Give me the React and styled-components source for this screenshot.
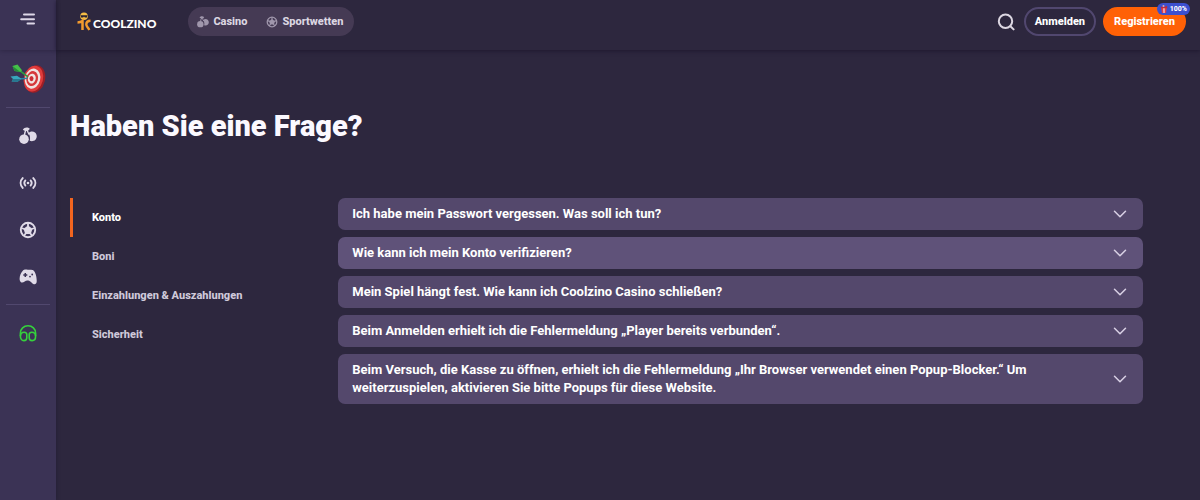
import React, { useState } from 'react';
import styled, { createGlobalStyle } from 'styled-components';


const GlobalStyle = createGlobalStyle`
    * {
        box-sizing: border-box;
    }

    body {
        margin: 0;
        background: #2d273e;
        color: #fff;
        font-family: Roboto, "Noto Sans", sans-serif;
        font-weight: 800;
    }

    button {
        border: 0;
        padding: 0;
        background: none;
        color: inherit;
        font: inherit;
        cursor: pointer;
    }

    a {
        color: inherit;
        text-decoration: none;
    }

    svg {
        display: block;
        flex: none;
    }
`;


const Page = styled.div`
    display: flex;
    min-height: 100vh;
`;

const Sidebar = styled.aside`
    display: flex;
    flex-direction: column;
    flex: none;
    width: 56px;
    background: #3b3355;
    box-shadow: 0 0 4px rgba(20, 14, 36, 0.4);
`;

const MenuButton = styled.button`
    display: flex;
    justify-content: center;
    height: 50px;
    padding-top: 10px;
    box-shadow: 0 1px 4px rgba(20, 14, 36, 0.3);
`;

const SideNav = styled.nav`
    display: flex;
    flex-direction: column;
    align-items: center;
    padding-top: 3px;
`;

const SideLink = styled.a`
    display: flex;
    align-items: center;
    justify-content: center;
    width: 100%;
    height: ${ ({ $tall }) => $tall ? 50 : 47 }px;
    color: ${ ({ $color }) => $color || '#e0dbe8' };
`;

const Divider = styled.hr`
    width: 44px;
    margin: 4px 0;
    border: 0;
    border-top: 1px solid #51486e;
`;

const Column = styled.div`
    display: flex;
    flex-direction: column;
    flex: 1;
    min-width: 0;
`;

const Header = styled.header`
    display: flex;
    align-items: flex-start;
    height: 50px;
    padding: 7px 14px 0 21px;
    box-shadow: 0 1px 4px rgba(20, 14, 36, 0.6);
`;

const Logo = styled.a`
    display: flex;
    align-items: center;
    gap: 2px;
    height: 32px;
    font-family: Lato, sans-serif;
    font-size: 12px;
    font-weight: 900;

    svg {
        margin-bottom: 4px;
    }
`;

const Switcher = styled.nav`
    display: flex;
    align-items: center;
    gap: 19px;
    height: 29px;
    margin-left: 32px;
    padding: 0 11px 0 9px;
    border-radius: 15px;
    background: #453a54;
`;

const SwitchLink = styled.a`
    display: flex;
    align-items: center;
    gap: 4px;
    color: #dcd7e2;
    font-size: 11px;

    svg {
        color: #a097ac;
    }
`;

const Actions = styled.div`
    display: flex;
    align-items: center;
    gap: 7px;
    margin-left: auto;
`;

const SearchButton = styled.button`
    margin-right: 2px;
    color: #dcd7e2;
`;

const PillButton = styled.button`
    position: relative;
    height: 29px;
    padding: 0 9px;
    border: 2px solid ${ ({ $primary }) => $primary ? '#ff6106' : '#51476f' };
    border-radius: 15px;
    background: ${ ({ $primary }) => $primary ? '#ff6106' : 'transparent' };
    font-size: 11px;
    line-height: 16px;
`;

const Badge = styled.span`
    position: absolute;
    top: -6px;
    right: -6px;
    display: flex;
    align-items: center;
    gap: 2px;
    height: 12px;
    padding: 0 3px;
    border-radius: 6px;
    background: #3c50cf;
    font-size: 7px;
    line-height: 12px;
`;

const Main = styled.main`
    padding: 54px 57px 54px 14px;
`;

const Title = styled.h1`
    margin: 0 0 50px;
    font-size: 29px;
    font-weight: 900;
    line-height: 44px;
    color: #fbf9ff;
`;

const Faq = styled.div`
    display: grid;
    grid-template-columns: 1fr 3fr;
    align-items: start;
`;

const Topics = styled.nav`
    display: flex;
    flex-direction: column;
`;

const Topic = styled.button`
    height: 39px;
    padding: 0 19px;
    border-left: 3px solid ${ ({ $active }) => $active ? '#f2651f' : 'transparent' };
    color: ${ ({ $active }) => $active ? '#fff' : '#cfc9da' };
    font-size: 11px;
    text-align: left;
`;

const Questions = styled.div`
    display: flex;
    flex-direction: column;
    gap: 7px;
`;

const Question = styled.button`
    display: flex;
    align-items: center;
    justify-content: space-between;
    gap: 72px;
    padding: 7px 16px 7px 14px;
    border-radius: 7px;
    background: ${ ({ $lit }) => $lit ? '#5f5279' : '#54486c' };
    font-size: 13px;
    font-weight: 700;
    line-height: 18px;
    text-align: left;
`;


const MenuIcon = () =>
    <svg width="16" height="16" viewBox="0 0 16 16" stroke="#ddd7e8" strokeWidth="2" strokeLinecap="round">
        <path d="M4 4.6h10M1.2 9.2h12.8M7.5 13.6H14"/>
    </svg>;

const DartIcon = () =>
    <svg width="36" height="32" viewBox="0 0 36 32">
        <ellipse cx="25" cy="17" rx="10" ry="14" fill="#9c1f26" transform="rotate(14 25 17)"/>
        <ellipse cx="23.4" cy="16.6" rx="9.6" ry="13" fill="#df3b3b" transform="rotate(14 23.4 16.6)"/>
        <ellipse cx="22.6" cy="16.6" rx="7.6" ry="10.2" fill="#efe1df" transform="rotate(14 22.6 16.6)"/>
        <ellipse cx="22.2" cy="16.6" rx="5.8" ry="7.6" fill="#d5383a" transform="rotate(14 22.2 16.6)"/>
        <ellipse cx="21.8" cy="16.6" rx="3.9" ry="5" fill="#f0e4e1" transform="rotate(14 21.8 16.6)"/>
        <ellipse cx="21.5" cy="16.6" rx="2" ry="2.6" fill="#c92d33"/>
        <path d="M9 8l9 6.800" stroke="#2f9a44" strokeWidth="1.6"/>
        <path d="M9 17l8.500-.8" stroke="#2b86a4" strokeWidth="1.6"/>
        <path d="M2.500 4L7.500 2.500l4.500 5.800-1.600 1.800L4.500 8.900z" fill="#45c149"/>
        <path d="M2.500 4l7.900 6.100-5.900-1.200z" fill="#258c3a"/>
        <path d="M.5 14.500l6.500-.8 4.500 3-3.900 3-6-.2 1.400-2.500z" fill="#37a6bd"/>
        <path d="M3 17h8.500l-3.900 2.700-6-.2z" fill="#27778f"/>
    </svg>;

const CherryIcon = ({ size=18 }) =>
    <svg width={ size } height={ size } viewBox="0 0 18 18" fill="currentColor">
        <path d="M9.300 6.300C11 4.200 14 3.900 16 5.500c2.200 1.800 2.300 5.300.4 7.200-1.500 1.500-3.800 1.800-5.700 1 .7-2.800.3-5.500-1.400-7.400z"/>
        <circle cx="5" cy="12.200" r="4.800"/>
        <path d="M5.300 8.300c.4-2.300.8-4 1.900-5.700M8.400 2.800c0 2.100.6 3.300 1.800 4.700" fill="none" stroke="currentColor" strokeWidth="1.400"/>
        <path d="M3.800 2.700C5.300.1 8.800-.2 10.800 1.800 9.600 4.200 6.200 4.600 3.800 2.700z"/>
    </svg>;

const LiveIcon = () =>
    <svg width="18" height="18" viewBox="0 0 18 18" fill="none" stroke="currentColor" strokeWidth="1.800" strokeLinecap="round">
        <path d="M3.800 4C.8 6.800.8 11.200 3.800 14M14.200 4c3 2.800 3 7.200 0 10M6.400 6.400C5 8 5 10 6.400 11.600M11.600 6.400c1.400 1.600 1.400 3.600 0 5.200"/>
        <circle cx="9" cy="9" r="1.300" fill="currentColor" stroke="none"/>
    </svg>;

const BallIcon = ({ size=18 }) =>
    <svg width={ size } height={ size } viewBox="0 0 18 18">
        <circle cx="9" cy="9" r="7.200" fill="none" stroke="currentColor" strokeWidth="1.900"/>
        <path d="M9 4.400l4.500 3.300-1.700 5.200H6.200L4.500 7.700z" fill="currentColor"/>
        <path d="M9 5.500V2M12.500 8l3.200-1M11.200 12.200l2 2.800M6.800 12.200l-2 2.800M5.500 8L2.300 7" stroke="currentColor" strokeWidth="1.800"/>
    </svg>;

const GamepadIcon = () =>
    <svg width="18" height="18" viewBox="0 0 18 18">
        <path d="M4 2.500C5.200 1.300 7 1.600 8.800 1.800c2 .2 4.200-.4 5.700.8 2.200 1.900 3.400 7 3.200 11-.1 2.300-1.700 3.200-3.400 2.400-1.700-.8-2.300-2.600-4.200-3.200-1.800-.6-3.200-.2-4.400.6-1.400 1-2.800 1.600-4 .5C-.6 12 1 5.200 4 2.500z" fill="currentColor"/>
        <path d="M6.300 5v4M4.300 7h4" stroke="#3b3355" strokeWidth="1.500"/>
        <circle cx="11" cy="8.600" r=".9" fill="#3b3355"/>
        <circle cx="13.200" cy="6.500" r=".9" fill="#3b3355"/>
    </svg>;

const SupportIcon = () =>
    <svg width="18" height="18" viewBox="0 0 18 18" fill="none" stroke="currentColor" strokeWidth="1.600" strokeLinejoin="round">
        <path d="M1.400 12V9.200C1.400 4.900 4.700 1.800 9 1.800s7.600 3.100 7.600 7.400V12"/>
        <path d="M1.400 12.200c0-2.500 1.500-4 3.900-3.900 1.600.1 2.500.9 2.500 2.300v3.200c0 1.900-1.200 2.800-2.900 2.800-2.200 0-3.500-1.800-3.500-4.400zM16.600 12.200c0-2.500-1.500-4-3.900-3.900-1.600.1-2.500.9-2.500 2.300v3.200c0 1.900 1.200 2.800 2.900 2.800 2.200 0 3.500-1.800 3.500-4.400z"/>
    </svg>;

const MascotIcon = () =>
    <svg width="14" height="19" viewBox="0 0 14 19">
        <circle cx="7" cy="4.200" r="3.800" fill="#f5bd45"/>
        <path d="M3.500 3.300h7l-.6 2.200H7.800L7 4.600l-.8.900H4.100z" fill="#262033"/>
        <path d="M.5 10.500c2.600-.1 3.900-.6 5-1.500V18" fill="none" stroke="#f39a2e" strokeWidth="2.500"/>
        <path d="M13.500 8.700c-2.200 0-4.200 1.300-4.200 3.800 0 2 1.700 2.600 3 5.500" fill="none" stroke="#f39a2e" strokeWidth="2.400"/>
    </svg>;

const SearchIcon = () =>
    <svg width="18" height="18" viewBox="0 0 18 18" fill="none" stroke="currentColor" strokeWidth="2" strokeLinecap="round">
        <circle cx="8.500" cy="8.200" r="6.700"/>
        <path d="M13.400 13.200l3.200 3.200"/>
    </svg>;

const GiftIcon = () =>
    <svg width="8" height="8" viewBox="0 0 8 8">
        <path d="M1.200 3h5.600L6 8H2z" fill="#e13b47"/>
        <path d="M3.200 3h1.500v5H3.400z" fill="#f7c9c9"/>
        <path d="M.8 1.600L4 2.300l3-1.500.3 2.400H1z" fill="#c22b3b"/>
        <circle cx="3.500" cy="1" r="1" fill="#f0a0a0"/>
    </svg>;

const ChevronIcon = () =>
    <svg width="14" height="14" viewBox="0 0 14 14" fill="none" stroke="#d8d0e4" strokeWidth="1.500" strokeLinecap="round" strokeLinejoin="round">
        <path d="M1.500 4.200L7 9.800l5.500-5.600"/>
    </svg>;


const topics = ['Konto', 'Boni', 'Einzahlungen & Auszahlungen', 'Sicherheit'];

const questions = [
    'Ich habe mein Passwort vergessen. Was soll ich tun?',
    'Wie kann ich mein Konto verifizieren?',
    'Mein Spiel hängt fest. Wie kann ich Coolzino Casino schließen?',
    'Beim Anmelden erhielt ich die Fehlermeldung „Player bereits verbunden“.',
    'Beim Versuch, die Kasse zu öffnen, erhielt ich die Fehlermeldung „Ihr Browser verwendet einen Popup-Blocker.“ Um weiterzuspielen, aktivieren Sie bitte Popups für diese Website.'
];


const App = () => {
    const
        [topic, setTopic] = useState(0),
        [lit, setLit] = useState(1);

    return <>
        <GlobalStyle/>
        <Page>
            <Sidebar>
                <MenuButton aria-label="Menü"><MenuIcon/></MenuButton>
                <SideNav>
                    <SideLink href="#" $tall><DartIcon/></SideLink>
                    <Divider/>
                    <SideLink href="#"><CherryIcon/></SideLink>
                    <SideLink href="#"><LiveIcon/></SideLink>
                    <SideLink href="#"><BallIcon/></SideLink>
                    <SideLink href="#"><GamepadIcon/></SideLink>
                    <Divider/>
                    <SideLink href="#" $color="#35d23c"><SupportIcon/></SideLink>
                </SideNav>
            </Sidebar>
            <Column>
                <Header>
                    <Logo href="#"><MascotIcon/>COOLZINO</Logo>
                    <Switcher>
                        <SwitchLink href="#"><CherryIcon size={ 12 }/>Casino</SwitchLink>
                        <SwitchLink href="#"><BallIcon size={ 12 }/>Sportwetten</SwitchLink>
                    </Switcher>
                    <Actions>
                        <SearchButton aria-label="Suche"><SearchIcon/></SearchButton>
                        <PillButton>Anmelden</PillButton>
                        <PillButton $primary>
                            Registrieren
                            <Badge><GiftIcon/>100%</Badge>
                        </PillButton>
                    </Actions>
                </Header>
                <Main>
                    <Title>Haben Sie eine Frage?</Title>
                    <Faq>
                        <Topics>
                            { topics.map((name, index) =>
                                <Topic key={ name } $active={ index === topic } onClick={ () => setTopic(index) }>
                                    { name }
                                </Topic>
                            ) }
                        </Topics>
                        <Questions>
                            { questions.map((text, index) =>
                                <Question key={ text } $lit={ index === lit } onMouseEnter={ () => setLit(index) }>
                                    { text }
                                    <ChevronIcon/>
                                </Question>
                            ) }
                        </Questions>
                    </Faq>
                </Main>
            </Column>
        </Page>
    </>;
};

export default App;
